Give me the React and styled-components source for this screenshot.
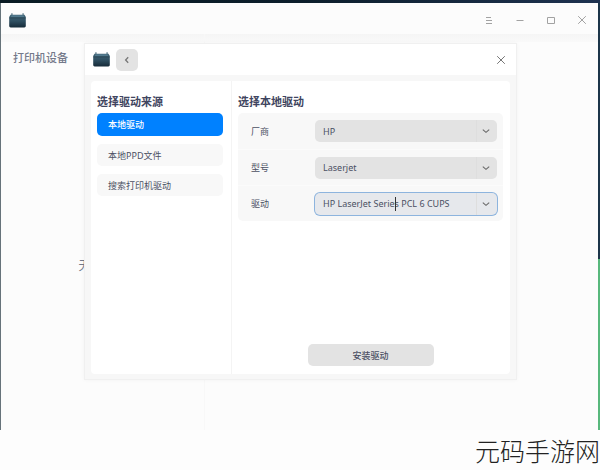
import React from 'react';
import styled, { createGlobalStyle, css } from 'styled-components';

const colors = {
  window: '#fcfcfc',
  line: '#f4f4f4',
  text: '#4b5063',
  heading: '#3f4560',
  muted: '#74798a',
  control: '#e3e3e3',
  row: '#f8f8f8',
  accent: '#0081ff',
  focus: '#8db4de'
};

const fontSizes = {
  small: '9px',
  medium: '11px',
  watermark: '25px'
};

const GlobalStyle = createGlobalStyle`
  * {
    box-sizing: border-box;
  }

  body {
    margin: 0;
    overflow: hidden;
    background: ${colors.window};
    font-family: 'Noto Sans', 'Noto Sans CJK SC', sans-serif;
    font-size: ${fontSizes.small};
    color: ${colors.text};
  }

  button,
  select {
    font: inherit;
    color: inherit;
    border: 0;
    margin: 0;
  }
`;

const Desktop = styled.div`
  display: flex;
  flex-direction: column;
  min-height: 100vh;
`;

const TopEdge = styled.div`
  height: 3px;
  background: linear-gradient(90deg, #091b23, #0c1e2b 50%, #1e3250);
`;

const Screen = styled.div`
  flex: 1;
  display: flex;
  padding: 0 2px 0 1px;
  background: linear-gradient(90deg, transparent 50%, #1c3549 50%) 0 0 / 100%
      60% no-repeat,
    linear-gradient(90deg, #66737a 50%, #58b87c 50%);
`;

const Window = styled.main`
  position: relative;
  flex: 1;
  display: flex;
  flex-direction: column;
  padding-top: 3px;
  background: ${colors.window};
`;

const TitleBar = styled.header`
  display: flex;
  align-items: center;
  justify-content: space-between;
  height: 28px;
  padding: 0 9px 0 7px;
`;

const WindowActions = styled.div`
  display: flex;
  gap: 17px;
`;

const IconButton = styled.button`
  display: grid;
  place-items: center;
  width: 14px;
  height: 14px;
  padding: 0;
  background: none;
  color: #a2a2a2;
`;

const WindowBody = styled.div`
  flex: 1;
  display: flex;
  background: linear-gradient(#f5f5f5, #f9f9f9) 0 0 / 100% 8px no-repeat;
`;

const Sidebar = styled.aside`
  display: flex;
  flex-direction: column;
  width: 204px;
  padding: 15px 12px;
  border-right: 1px solid #f8f8f8;
`;

const SidebarTitle = styled.h1`
  margin: 0;
  font-size: ${fontSizes.medium};
  font-weight: 500;
  line-height: 18px;
  color: ${colors.muted};
`;

const EmptyText = styled.p`
  margin: 190px 0 0;
  font-size: 12px;
  line-height: 18px;
  text-align: center;
  color: ${colors.muted};
`;

const Dialog = styled.section`
  position: absolute;
  top: 40px;
  left: 83px;
  right: 81px;
  display: flex;
  flex-direction: column;
  background: #f7f7f7;
  border: 1px solid #f0f0f0;
  box-shadow: 0 0 4px rgba(0, 0, 0, 0.04);
`;

const DialogHeader = styled.header`
  display: flex;
  align-items: center;
  gap: 5px;
  height: 31px;
  padding: 0 8px 0 7px;
  background: #fff;
`;

const DialogClose = styled(IconButton)`
  margin-left: auto;
  color: #777;
`;

const BackButton = styled.button`
  display: grid;
  place-items: center;
  width: 22px;
  height: 22px;
  padding: 0;
  border-radius: 5px;
  background: ${colors.control};
  color: #777;
`;

const DialogBody = styled.div`
  display: flex;
  min-height: 293px;
  margin: 6px 6px 5px;
  background: #fff;
  border-radius: 4px;
`;

const SourcePane = styled.nav`
  display: flex;
  flex-direction: column;
  gap: 8px;
  width: 141px;
  padding: 12px 8px 0 6px;
  border-right: 1px solid ${colors.line};
`;

const DriverPane = styled.form`
  flex: 1;
  display: flex;
  flex-direction: column;
  padding: 12px 7px 8px 6px;
`;

const PaneTitle = styled.h2`
  margin: 0;
  font-size: ${fontSizes.medium};
  font-weight: 600;
  line-height: 18px;
  color: ${colors.heading};
`;

const SourceButton = styled.button`
  height: 22px;
  padding: 0 11px;
  border-radius: 5px;
  text-align: left;
  background: ${colors.row};

  ${({ $active }) =>
    $active &&
    css`
      margin-top: -6px;
      height: 23px;
      background: ${colors.accent};
      color: #fff;
      font-weight: 500;
    `}
`;

const Fields = styled.div`
  margin-top: 2px;
  border-radius: 5px;
  background: ${colors.row};
`;

const Field = styled.div`
  display: flex;
  align-items: center;
  height: 36px;
  padding: 0 6px 0 13px;

  & + & {
    border-top: 1px solid #fbfbfb;
  }
`;

const FieldLabel = styled.label`
  width: 64px;
`;

const SelectBox = styled.div`
  position: relative;
  flex: 1;
  display: grid;
`;

const Select = styled.select`
  grid-area: 1 / 1;
  appearance: none;
  height: 22px;
  padding: 0 24px 0 8px;
  border-radius: 5px;
  outline: 0;
  background: linear-gradient(90deg, #dedede, #dedede) right 20px center / 1px
      100% no-repeat,
    ${colors.control};

  ${({ $focused }) =>
    $focused &&
    css`
      background-color: #e6e8ec;
      box-shadow: 0 0 0 1px ${colors.focus};
    `}
`;

const SelectArrow = styled.span`
  grid-area: 1 / 1;
  justify-self: end;
  align-self: center;
  display: grid;
  padding-right: 7px;
  pointer-events: none;
  color: #666;
`;

const TextCursor = styled.span`
  position: absolute;
  top: 4px;
  left: 80px;
  width: 1px;
  height: 14px;
  background: #333;
`;

const InstallButton = styled.button`
  align-self: center;
  width: 126px;
  height: 22px;
  margin-top: auto;
  border-radius: 5px;
  background: ${colors.control};
  font-weight: 500;
`;

const Footer = styled.footer`
  display: flex;
  justify-content: flex-end;
  height: 40px;
  background: #fdfdfd;
`;

const Watermark = styled.span`
  font-family: 'Noto Sans CJK SC', sans-serif;
  font-size: ${fontSizes.watermark};
  font-weight: 300;
  line-height: 40px;
  color: #222;
`;

const fields = [
  { id: 'vendor', label: '厂商', value: 'HP' },
  { id: 'model', label: '型号', value: 'Laserjet' },
  {
    id: 'driver',
    label: '驱动',
    value: 'HP LaserJet Series PCL 6 CUPS',
    focused: true
  }
];

const sources = ['本地驱动', '本地PPD文件', '搜索打印机驱动'];

function PrinterLogo() {
  return (
    <svg width="19" height="15" viewBox="0 0 18 15" aria-hidden="true">
      <defs>
        <linearGradient id="printer" x1="0" y1="0" x2="0" y2="1">
          <stop offset="0" stopColor="#426577" />
          <stop offset="0.5" stopColor="#2f4f61" />
          <stop offset="1" stopColor="#162b39" />
        </linearGradient>
      </defs>
      <path d="M2.6 0.3h1.6v2H2.6zM13.8 0.3h1.6v2h-1.6z" fill="#7d95a0" />
      <path
        d="M2 1.8h14L17.3 4v9q0 1.4-1.4 1.4H2.1Q.7 14.4.7 13V4z"
        fill="url(#printer)"
      />
      <path d="M3.2 2.2h11.6l1 1.8H2.2z" fill="#527a8e" />
      <path d="M.9 5h16.2" stroke="#26414f" strokeWidth="0.7" />
    </svg>
  );
}

function Glyph({ d, size = 10, width = 1 }) {
  return (
    <svg
      width={size}
      height={size}
      viewBox="0 0 10 10"
      fill="none"
      stroke="currentColor"
      strokeWidth={width}
      aria-hidden="true"
    >
      <path d={d} />
    </svg>
  );
}

const closePath = 'M1.2 1.2l7.6 7.6M8.8 1.2L1.2 8.8';

const windowActions = [
  { label: '菜单', d: 'M2 2.5h5M2 5.5h6M2 8.5h6' },
  { label: '最小化', d: 'M1.5 5.5h7' },
  { label: '最大化', d: 'M1.5 2.5h7v6h-7z' },
  { label: '关闭', d: closePath }
];

function DriverField({ id, label, value, focused }) {
  return (
    <Field>
      <FieldLabel htmlFor={id}>{label}</FieldLabel>
      <SelectBox>
        <Select id={id} $focused={focused}>
          <option>{value}</option>
        </Select>
        <SelectArrow>
          <Glyph d="M1 3.4l4 3.4 4-3.4" size={8} width={1.3} />
        </SelectArrow>
        {focused && <TextCursor />}
      </SelectBox>
    </Field>
  );
}

function DriverDialog() {
  return (
    <Dialog role="dialog" aria-label="选择本地驱动">
      <DialogHeader>
        <PrinterLogo />
        <BackButton type="button" aria-label="返回">
          <Glyph d="M6.2 2.2L3.6 5l2.6 2.8" width={1.3} />
        </BackButton>
        <DialogClose type="button" aria-label="关闭">
          <Glyph d={closePath} />
        </DialogClose>
      </DialogHeader>
      <DialogBody>
        <SourcePane>
          <PaneTitle>选择驱动来源</PaneTitle>
          {sources.map((source, i) => (
            <SourceButton key={source} type="button" $active={i === 0}>
              {source}
            </SourceButton>
          ))}
        </SourcePane>
        <DriverPane>
          <PaneTitle>选择本地驱动</PaneTitle>
          <Fields>
            {fields.map(field => (
              <DriverField key={field.id} {...field} />
            ))}
          </Fields>
          <InstallButton type="button">安装驱动</InstallButton>
        </DriverPane>
      </DialogBody>
    </Dialog>
  );
}

function App() {
  return (
    <Desktop>
      <GlobalStyle />
      <TopEdge />
      <Screen>
        <Window>
          <TitleBar>
            <PrinterLogo />
            <WindowActions>
              {windowActions.map(({ label, d }) => (
                <IconButton key={label} type="button" aria-label={label}>
                  <Glyph d={d} />
                </IconButton>
              ))}
            </WindowActions>
          </TitleBar>
          <WindowBody>
            <Sidebar>
              <SidebarTitle>打印机设备</SidebarTitle>
              <EmptyText>无打印机</EmptyText>
            </Sidebar>
          </WindowBody>
          <DriverDialog />
        </Window>
      </Screen>
      <Footer>
        <Watermark>元码手游网</Watermark>
      </Footer>
    </Desktop>
  );
}

export default App;
